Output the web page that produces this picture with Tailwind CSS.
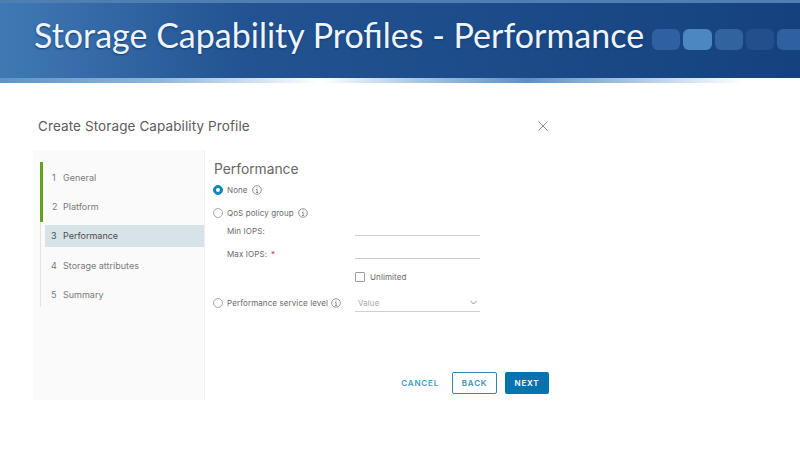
<!DOCTYPE html>
<html lang="en">
<head>
<meta charset="UTF-8">
<title>Storage Capability Profiles - Performance</title>
<script src="https://cdn.jsdelivr.net/npm/@tailwindcss/browser@4"></script>
</head>
<body class="bg-white w-[800px] h-[450px] overflow-hidden font-['Inter',sans-serif]">
  <!-- banner -->
  <div class="h-[84px] bg-white">
    <div class="h-[78px] bg-gradient-to-r from-[#4079b5] via-[#235392] via-30% to-[#15427f] border-t-[3px] border-[#4f7fb0] flex items-center pl-[34px] gap-[9px] overflow-hidden">
      <h1 class="font-['Lato',sans-serif] text-[34px] leading-none text-[#eef4fa] whitespace-nowrap w-[609px] -mt-[11px] [text-shadow:0_1px_2px_#123a70]">Storage Capability Profiles - Performance</h1>
      <div class="flex gap-[3px] -mt-[3px]">
        <div class="w-[28px] h-[21px] rounded-md bg-[#2f609f]"></div>
        <div class="w-[29px] h-[21px] rounded-md bg-[#4c87c1]"></div>
        <div class="w-[28px] h-[21px] rounded-md bg-[#31639f]"></div>
        <div class="w-[28px] h-[21px] rounded-md bg-[#234f8d]"></div>
        <div class="w-[28px] h-[21px] rounded-md bg-[#2f609f]"></div>
      </div>
    </div>
    <div class="h-[5px] bg-[linear-gradient(90deg,#5f94c9_0%,#8fb6dc_20%,#ffffff_40%,#a9c7e4_52%,#5a90c8_66%,#ffffff_93%)]"></div>
  </div>

  <!-- wizard -->
  <div class="w-[517px] ml-[33px]">
    <div class="h-[66px] flex items-center justify-between pl-[5px] pr-[1px] pt-[18px]">
      <h2 class="text-[13.5px] text-[#5c5c5c] tracking-[0.1px]">Create Storage Capability Profile</h2>
      <svg class="w-[10px] h-[10px] mr-[1px]" viewBox="0 0 10 10" fill="none" stroke="#8c8c8c" stroke-width="1"><path d="M0.5 0.5l9 9M9.5 0.5l-9 9"/></svg>
    </div>
    <div class="flex h-[250px]">
      <!-- steps -->
      <div class="w-[172px] bg-[#fafafa] border-r border-[#efefef] pt-[12px] pl-[7px]">
        <div class="flex h-[145px] border-l border-[#e3e3e3]">
          <div class="w-[3px] h-[60px] bg-[#62a420] -ml-[1px] shrink-0"></div>
          <div class="flex flex-col flex-1 text-[9px] text-[#7a7a7a]">
            <div class="h-[29px] shrink-0 mt-[1px] flex items-center pl-[9px]"><span class="w-[11px]">1</span><span>General</span></div>
            <div class="h-[29px] shrink-0 flex items-center pl-[9px]"><span class="w-[11px]">2</span><span>Platform</span></div>
            <div class="h-[22px] shrink-0 mt-[4px] ml-[2px] flex items-center pl-[6px] bg-[#d8e3e9] text-[#4c4c4c]"><span class="w-[12px]">3</span><span>Performance</span></div>
            <div class="h-[29px] shrink-0 mt-[4px] flex items-center pl-[8px]"><span class="w-[12px]">4</span><span>Storage attributes</span></div>
            <div class="h-[29px] shrink-0 flex items-center pl-[8px]"><span class="w-[12px]">5</span><span>Summary</span></div>
          </div>
        </div>
      </div>
      <!-- form -->
      <div class="flex-1 pl-[8px] pr-[1px] flex flex-col text-[8px] text-[#6a6a6a] tracking-[0.1px]">
        <h3 class="text-[13.8px] leading-none text-[#666] mt-[13px] ml-[1px] tracking-normal">Performance</h3>
        <div class="flex items-center mt-[6px] h-[14px]">
          <span class="w-[10px] h-[10px] rounded-full bg-[#0f86bd] border border-[#0f86bd] flex items-center justify-center"><span class="w-[4px] h-[4px] rounded-full bg-white"></span></span>
          <span class="ml-[4px]">None</span>
          <svg class="w-[10px] h-[10px] ml-[4px]" viewBox="0 0 10 10" fill="none" stroke="#777"><circle cx="5" cy="5" r="4.3" stroke-width=".8"/><path d="M4 4.5h1.1v3M4 7.5h2.2M5 2.4v1" stroke-width=".8"/></svg>
        </div>
        <div class="flex items-center mt-[9px] h-[14px]">
          <span class="w-[10px] h-[10px] rounded-full border border-[#a8a8a8] bg-white"></span>
          <span class="ml-[4px]">QoS policy group</span>
          <svg class="w-[10px] h-[10px] ml-[4px]" viewBox="0 0 10 10" fill="none" stroke="#777"><circle cx="5" cy="5" r="4.3" stroke-width=".8"/><path d="M4 4.5h1.1v3M4 7.5h2.2M5 2.4v1" stroke-width=".8"/></svg>
        </div>
        <div class="grid grid-cols-[128px_125px] pl-[14px] w-[280px]">
          <div class="h-[23px] flex items-center">Min IOPS:</div>
          <div class="h-[16px] border-b border-[#cfcfcf]"></div>
          <div class="h-[23px] flex items-center">Max IOPS:<span class="text-[#c0392b] ml-[4px]">*</span></div>
          <div class="h-[16px] border-b border-[#cfcfcf]"></div>
          <div class="h-[22px]"></div>
          <div class="h-[22px] flex items-center">
            <span class="w-[10px] h-[10px] border border-[#9c9c9c] rounded-[1px]"></span>
            <span class="ml-[5px]">Unlimited</span>
          </div>
        </div>
        <div class="flex items-start h-[17px] mt-[7px]">
          <span class="w-[10px] h-[10px] mt-[3px] rounded-full border border-[#a8a8a8] bg-white"></span>
          <span class="ml-[4px] w-[101px] whitespace-nowrap leading-[17px]">Performance service level</span>
          <svg class="w-[10px] h-[10px] ml-[3px] mt-[3px]" viewBox="0 0 10 10" fill="none" stroke="#777"><circle cx="5" cy="5" r="4.3" stroke-width=".8"/><path d="M4 4.5h1.1v3M4 7.5h2.2M5 2.4v1" stroke-width=".8"/></svg>
          <div class="ml-[14px] w-[125px] h-[17px] border-b border-[#cfcfcf] flex items-center justify-between pl-[3px] pr-[3px] text-[#a9a9a9]">
            <span>Value</span>
            <svg class="w-[7px] h-[5px]" viewBox="0 0 7 5" fill="none" stroke="#999"><path d="M0.5 1l3 3 3-3"/></svg>
          </div>
        </div>
        <div class="flex justify-end items-center mt-auto mb-[6px] gap-[13px] text-[8px] font-semibold tracking-[0.8px]">
          <button class="text-[#3f9cc2]">CANCEL</button>
          <div class="flex gap-[8px]">
            <button class="w-[45px] h-[22px] border border-[#2f87b2] rounded-[2px] text-[#3f8fb5]">BACK</button>
            <button class="w-[44px] h-[22px] rounded-[2px] bg-[#0474ae] text-white">NEXT</button>
          </div>
        </div>
      </div>
    </div>
  </div>
</body>
</html>
